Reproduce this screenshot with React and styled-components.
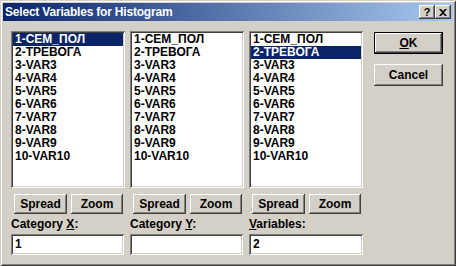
import React from "react";
import styled, { createGlobalStyle, css } from "styled-components";

const Global = createGlobalStyle`
  html, body { margin: 0; padding: 0; background: #d4d0c8; }
  body { font-family: "Liberation Sans", Arial, sans-serif; }
`;

const raised = css`
  box-shadow: inset -1px -1px #404040, inset 1px 1px #ffffff,
    inset -2px -2px #808080, inset 2px 2px #d4d0c8;
`;

const sunken = css`
  box-shadow: inset 1px 1px #808080, inset -1px -1px #ffffff,
    inset 2px 2px #404040, inset -2px -2px #d4d0c8;
`;

const Window = styled.div`
  width: 456px;
  height: 266px;
  box-sizing: border-box;
  padding: 3px;
  background: #d4d0c8;
  display: flex;
  flex-direction: column;
  box-shadow: inset 1px 1px #d4d0c8, inset -1px -1px #404040,
    inset 2px 2px #ffffff, inset -2px -2px #808080;
  font: bold 12px "Liberation Sans", Arial, sans-serif;
  color: #000;
`;

const TitleBar = styled.div`
  height: 18px;
  display: flex;
  align-items: center;
  padding-left: 2px;
  background: linear-gradient(to right, #0a246a, #a6caf0);
`;

const Title = styled.span`
  color: #fff;
  font-size: 12px;
  font-weight: bold;
  letter-spacing: -0.2px;
`;

const TitleButtons = styled.div`
  margin-left: auto;
  margin-right: 2px;
  display: flex;
`;

const CaptionButton = styled.div`
  width: 16px;
  height: 14px;
  box-sizing: border-box;
  background: #d4d0c8;
  ${raised};
  display: flex;
  align-items: center;
  justify-content: center;
  font: bold 11px "Liberation Sans", Arial, sans-serif;
  line-height: 14px;
`;

const Body = styled.div`
  display: flex;
  padding: 10px 0 0 8px;
`;

const Columns = styled.div`
  display: grid;
  grid-template-columns: repeat(3, 114px);
  column-gap: 5px;
`;

const Column = styled.div`
  display: flex;
  flex-direction: column;
`;

const List = styled.div`
  height: 157px;
  box-sizing: border-box;
  padding: 2px;
  background: #fff;
  ${sunken};
`;

const Item = styled.div`
  height: 13px;
  line-height: 13px;
  padding-left: 2px;
  white-space: nowrap;
  background: ${(p) => (p.$selected ? "#0a246a" : "transparent")};
  color: ${(p) => (p.$selected ? "#fff" : "#000")};
`;

const ButtonRow = styled.div`
  display: flex;
  gap: 4px;
  margin-top: 6px;
  padding-left: 3px;
`;

const Button = styled.div`
  width: ${(p) => p.$w || 52}px;
  height: ${(p) => p.$h || 20}px;
  box-sizing: border-box;
  background: #d4d0c8;
  ${raised};
  display: flex;
  align-items: center;
  justify-content: center;
`;

const DefaultButton = styled(Button)`
  box-shadow: inset 0 0 0 1px #000, inset -2px -2px #404040,
    inset 2px 2px #ffffff, inset -3px -3px #808080;
`;

const Label = styled.div`
  margin-top: 2px;
  height: 16px;
  line-height: 16px;
`;

const U = styled.span`
  text-decoration: underline;
`;

const Input = styled.div`
  margin-top: 2px;
  width: ${(p) => p.$w || 113}px;
  height: 21px;
  box-sizing: border-box;
  padding: 3px 0 0 4px;
  line-height: 15px;
  background: #fff;
  ${sunken};
`;

const Side = styled.div`
  margin-left: 11px;
  margin-top: 1px;
  display: flex;
  flex-direction: column;
  gap: 10px;
`;

const vars = [
  "1-СЕМ_ПОЛ",
  "2-ТРЕВОГА",
  "3-VAR3",
  "4-VAR4",
  "5-VAR5",
  "6-VAR6",
  "7-VAR7",
  "8-VAR8",
  "9-VAR9",
  "10-VAR10",
];

const cols = [
  { sel: 0, label: <>Category <U>X</U>:</>, value: "1", w: 113 },
  { sel: -1, label: <>Category <U>Y</U>:</>, value: "", w: 113 },
  { sel: 1, label: <><U>V</U>ariables:</>, value: "2", w: 114 },
];

export default function App() {
  return (
    <>
      <Global />
      <Window>
        <TitleBar>
          <Title>Select Variables for Histogram</Title>
          <TitleButtons>
            <CaptionButton>?</CaptionButton>
            <CaptionButton>
              <svg width="8" height="7" viewBox="0 0 8 7">
                <path d="M0 0h2l2 2 2-2h2L5 3.5 8 7H6L4 5 2 7H0l3-3.5z" fill="#000" />
              </svg>
            </CaptionButton>
          </TitleButtons>
        </TitleBar>
        <Body>
          <Columns>
            {cols.map((c, i) => (
              <Column key={i}>
                <List>
                  {vars.map((v, j) => (
                    <Item key={j} $selected={j === c.sel}>
                      {v}
                    </Item>
                  ))}
                </List>
                <ButtonRow>
                  <Button $w={53}>Spread</Button>
                  <Button $w={52}>Zoom</Button>
                </ButtonRow>
                <Label>{c.label}</Label>
                <Input $w={c.w}>{c.value}</Input>
              </Column>
            ))}
          </Columns>
          <Side>
            <DefaultButton $w={69} $h={22}>
              <U>O</U>K
            </DefaultButton>
            <Button $w={69} $h={22}>
              Cancel
            </Button>
          </Side>
        </Body>
      </Window>
    </>
  );
}
